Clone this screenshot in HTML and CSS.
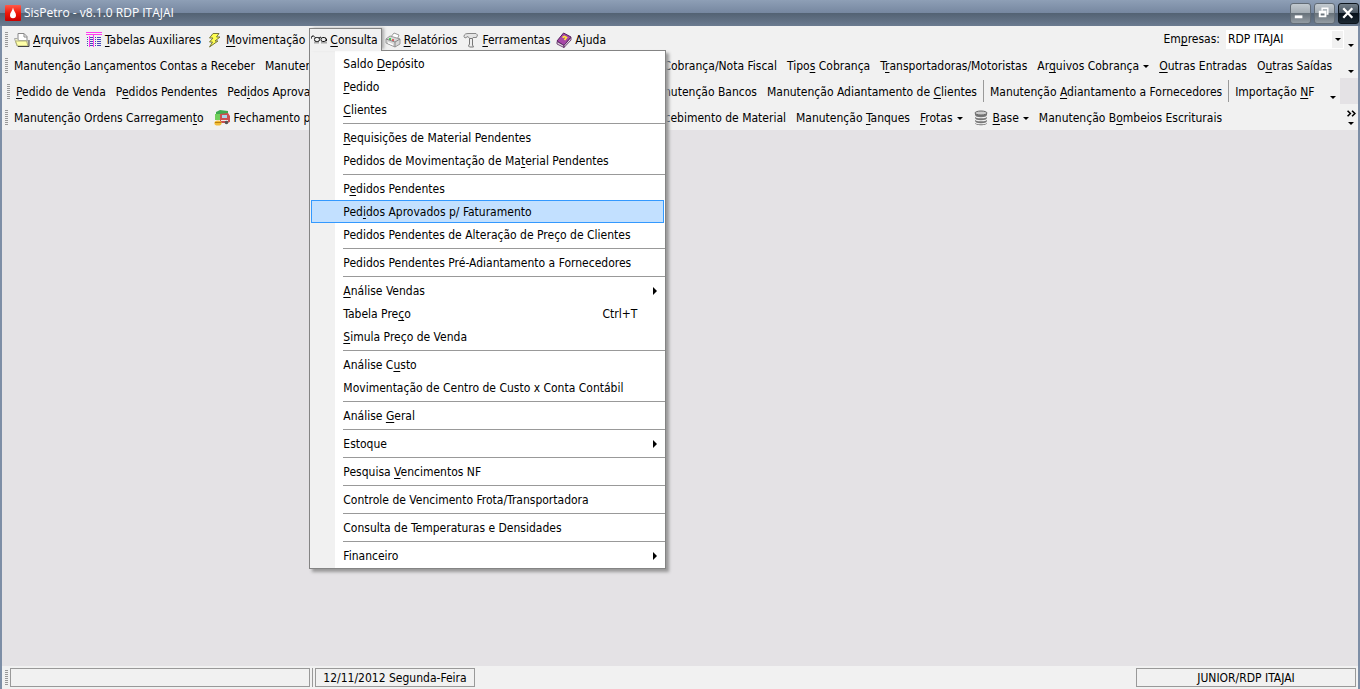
FILE: index.html
```
<!DOCTYPE html>
<html lang="pt-BR">
<head>
<meta charset="utf-8">
<title>SisPetro - v8.1.0 RDP ITAJAI</title>
<link rel="stylesheet" href="styles.css">
</head>
<body>
<div class="window">
  <header class="titlebar">
    <svg class="logo" viewBox="0 0 16 16"><defs><linearGradient id="red" x1="0" y1="0" x2="0" y2="1"><stop offset="0" stop-color="#ff5a4a"/><stop offset=".5" stop-color="#f01808"/><stop offset="1" stop-color="#c80000"/></linearGradient></defs><rect width="16" height="16" rx="1" fill="url(#red)"/><path d="M8 2.500C8.600 6 11 7.500 11 10.200a3 3 0 0 1-6 0C5 7.500 7.400 6 8 2.500z" fill="#fff"/></svg>
    <h1 class="title">SisPetro - v8.1.0 RDP ITAJAI</h1>
    <div class="controls">
      <button class="control" aria-label="Minimizar"><svg viewBox="0 0 20 20"><path d="M4 12h8v3H4z" fill="#fff"/></svg></button>
      <button class="control" aria-label="Restaurar"><svg viewBox="0 0 20 20"><path d="M7.500 7V4.500h6v6H12" fill="none" stroke="#fff" stroke-width="1.500"/><path d="M4 7h8v7H4z M6 10v2h4v-2z" fill="#fff" fill-rule="evenodd"/></svg></button>
      <button class="control close" aria-label="Fechar"><svg viewBox="0 0 20 20"><path d="M4.500 4.500l9.500 10M14 4.500l-9.500 10" stroke="#fff" stroke-width="2.400"/></svg></button>
    </div>
  </header>

  <div class="client">
    <div class="bar">
      <span class="grip"></span>
      <nav class="mainmenu">
        <button class="item"><svg class="icon" viewBox="0 0 16 16"><path d="M4 8V1.500h6l3 3V10" fill="#fff" stroke="#888"/><path d="M10 1.500V5h3" fill="none" stroke="#888"/><path d="M.5 6.500h3l1 2h9.500v5.500H3z" fill="#f4f4cc" stroke="#aaa"/><path d="M1.500 9l2 5h10.500l-1.500-5z" fill="#ffffa8" stroke="#b4b478"/><path d="M15 8v6.500H4" fill="none" stroke="#444"/></svg><span><u>A</u>rquivos</span></button>
        <button class="item"><svg class="icon" viewBox="0 0 16 16" shape-rendering="crispEdges"><path d="M0 0h16v1H0zM0 2h7v1H0zM8 2h8v1H8zM7 2h1v13H7zM3 4h1v11H3z" fill="#ff3cf0"/><path d="M4 5h3v1H4zM4 7h3v1H4zM4 9h3v1H4zM4 11h3v1H4zM4 13h3v1H4zM1 5h1v1H1zM1 7h1v1H1zM1 9h1v1H1zM1 11h1v1H1zM1 13h1v1H1zM9 5h1v1H9zM9 7h1v1H9zM9 9h1v1H9zM9 11h1v1H9zM9 13h1v1H9zM11 5h4v1h-4zM11 7h4v1h-4zM11 9h4v1h-4zM11 11h4v1h-4zM11 13h4v1h-4z" fill="#4848b8"/></svg><span><u>T</u>abelas Auxiliares</span></button>
        <button class="item"><svg class="icon" viewBox="0 0 16 16"><path d="M6 1.500h6L9.500 5H13L8 9h3L2.500 15l3-5H2.500L6 6H2.500z" fill="#ffff50" stroke="#77773a"/></svg><span><u>M</u>ovimentação</span></button>
        <div class="opened">
          <button class="item active" aria-expanded="true"><svg class="icon" viewBox="0 0 16 16"><path d="M3 10.500h5M10 10.500h6" stroke="#aaa" stroke-width="2"/><path d="M0 7V5h1l1-1.500 2 2M8 6l2-1M14 6l1.500 1v2" fill="none" stroke="#111"/><rect x="3.500" y="5.500" width="5" height="4" rx="1.800" fill="#eee" stroke="#111"/><rect x="10" y="5.500" width="5" height="4" rx="1.800" fill="#eee" stroke="#111"/></svg><span><u>C</u>onsulta</span></button>
          <ul class="dropdown">
            <li><button class="entry"><span>Saldo <u>D</u>epósito</span></button></li>
            <li><button class="entry"><span><u>P</u>edido</span></button></li>
            <li><button class="entry"><span><u>C</u>lientes</span></button></li>
            <li class="rule"></li>
            <li><button class="entry"><span><u>R</u>equisições de Material Pendentes</span></button></li>
            <li><button class="entry"><span>Pedidos de Movimentação de Ma<u>t</u>erial Pendentes</span></button></li>
            <li class="rule"></li>
            <li><button class="entry"><span>P<u>e</u>didos Pendentes</span></button></li>
            <li><button class="entry selected"><span>Ped<u>i</u>dos Aprovados p/ Faturamento</span></button></li>
            <li><button class="entry"><span>Pedidos Pendentes de Alteração de Preço de Clientes</span></button></li>
            <li class="rule"></li>
            <li><button class="entry"><span>Pedidos Pendentes Pré-Adiantamento a Fornecedores</span></button></li>
            <li class="rule"></li>
            <li><button class="entry"><span><u>A</u>nálise Vendas</span><i class="more"></i></button></li>
            <li><button class="entry"><span>Tabela Pre<u>ç</u>o</span><kbd>Ctrl+T</kbd></button></li>
            <li><button class="entry"><span><u>S</u>imula Preço de Venda</span></button></li>
            <li class="rule"></li>
            <li><button class="entry"><span>Análise C<u>u</u>sto</span></button></li>
            <li><button class="entry"><span>Movimentação de Centro de Custo x Conta Contábil</span></button></li>
            <li class="rule"></li>
            <li><button class="entry"><span>Análise <u>G</u>eral</span></button></li>
            <li class="rule"></li>
            <li><button class="entry"><span>Estoque</span><i class="more"></i></button></li>
            <li class="rule"></li>
            <li><button class="entry"><span>Pesquisa <u>V</u>encimentos NF</span></button></li>
            <li class="rule"></li>
            <li><button class="entry"><span>Controle de Vencimento Frota/Transportadora</span></button></li>
            <li class="rule"></li>
            <li><button class="entry"><span>Consulta de Temperaturas e Densidades</span></button></li>
            <li class="rule"></li>
            <li><button class="entry"><span>Financeiro</span><i class="more"></i></button></li>
          </ul>
        </div>
        <button class="item"><svg class="icon" viewBox="0 0 16 16"><path d="M5 6l4-5 5 2-2 5" fill="#fff" stroke="#999"/><path d="M1 7l4-3 10 3v5l-5 3-9-4z" fill="#d8d8d8" stroke="#999"/><path d="M1 7l9 3 5-3M10 10v5" fill="none" stroke="#888"/><path d="M3 10l5 2v1.500l-5-2z" fill="#fff"/><path d="M4 7h2" stroke="#1fc030" stroke-width="1.500"/><path d="M7 8h2" stroke="#e04040" stroke-width="1.500"/></svg><span><u>R</u>elatórios</span></button>
        <button class="item"><svg class="icon" viewBox="0 0 16 16"><path d="M1 4.500C1 2 3 1.500 6 1.500h7l1.500 1.500-1 2.500H10l-1 1H6.500L5 4.500 2 6z" fill="#e4e4e4" stroke="#888"/><path d="M6.500 6.500h3V13l1 2h-4l-1-1 1-2z" fill="#eee" stroke="#777"/></svg><span><u>F</u>erramentas</span></button>
        <button class="item"><svg class="icon" viewBox="0 0 16 16"><path d="M1 9L7.500 1l7.500 4-7 8.500z" fill="#a848a8" stroke="#54205c"/><path d="M1 9.500v2.500l7 3.500v-2zM8 13.500l7-8v2.500l-7 7.500z" fill="#e4dce4" stroke="#54205c" stroke-width=".8"/><path d="M6.500 5.500l2-1 2 1-2 2.500" fill="none" stroke="#ffe838" stroke-width="1.600"/></svg><span>Ajuda</span></button>
      </nav>
      <div class="company">
        <label for="company">Em<u>p</u>resas:</label>
        <span class="combo"><select id="company"><option>RDP ITAJAI</option></select><i class="caret"></i></span>
      </div>
      <span class="overflow"><i class="caret"></i></span>
    </div>

    <div class="bar">
      <span class="grip"></span>
      <div class="lead">
        <button class="item">Manutenção Lançamentos Contas a Receber</button>
        <button class="item">Manutenção</button>
        <button class="item last">Cobrança/Nota Fiscal</button>
      </div>
      <button class="item"><span>Tipo<u>s</u> Cobrança</span></button>
      <button class="item"><span>T<u>r</u>ansportadoras/Motoristas</span></button>
      <button class="item"><span>Ar<u>q</u>uivos Cobrança</span><i class="caret"></i></button>
      <button class="item"><span><u>O</u>utras Entradas</span></button>
      <button class="item"><span>O<u>u</u>tras Saídas</span></button>
      <span class="overflow"><i class="caret"></i></span>
    </div>

    <div class="bar short">
      <span class="grip"></span>
      <div class="lead narrow">
        <button class="item"><span><u>P</u>edido de Venda</span></button>
        <button class="item"><span>P<u>e</u>didos Pendentes</span></button>
        <button class="item"><span>Ped<u>i</u>dos Aprovados</span></button>
        <button class="item last">Manutenção Bancos</button>
      </div>
      <button class="item"><span>Manutenção Adiantamento de <u>C</u>lientes</span></button>
      <span class="divider"></span>
      <button class="item"><span>Manutenção <u>A</u>diantamento a Fornecedores</span></button>
      <span class="divider"></span>
      <button class="item"><span>Importação <u>N</u>F</span></button>
      <span class="overflow"><i class="caret"></i></span>
    </div>

    <div class="bar">
      <span class="grip"></span>
      <div class="lead wide">
        <button class="item"><span>Manutenção Ordens Carregamen<u>t</u>o</span></button>
        <button class="item"><svg class="icon" viewBox="0 0 16 16"><path d="M2 2l4-2 8 1v6H2z" fill="#3faa50"/><path d="M1 4h5v6H1z" fill="#72cf5c"/><path d="M6 4l8-1 2 3v6l-3 1H6z" fill="#cc4f52"/><path d="M8 5h5v3H8z" fill="#a8d4ee"/><path d="M7 10h7v1H7z" fill="#eee"/><circle cx="12.500" cy="12.500" r="1.800" fill="#555"/><ellipse cx="4" cy="13" rx="3.600" ry="2.600" fill="#f2bd38"/><path d="M1 12.500h6" stroke="#b98010"/></svg><span>Fechamento p</span></button>
        <button class="item last">Recebimento de Material</button>
      </div>
      <button class="item"><span>Manutenção <u>T</u>anques</span></button>
      <button class="item"><span><u>F</u>rotas</span><i class="caret"></i></button>
      <button class="item"><svg class="icon" viewBox="0 0 16 16"><path d="M2 3v10c0 3 12 3 12 0V3z" fill="#777"/><path d="M2 5.500c0 3 12 3 12 0M2 8.500c0 3 12 3 12 0M2 11.500c0 3 12 3 12 0" fill="none" stroke="#eee" stroke-width="1.200"/><ellipse cx="8" cy="3" rx="6" ry="2" fill="#ccc" stroke="#666"/></svg><span><u>B</u>ase</span><i class="caret"></i></button>
      <button class="item"><span>Manutenção B<u>o</u>mbeios Escriturais</span></button>
      <span class="overflow more-items"><svg class="chevrons" viewBox="0 0 8 6"><path d="M.5.500L3 3 .5 5.500M4.500.500L7 3 4.500 5.500" fill="none" stroke="#000" stroke-width="1.400"/></svg><i class="caret"></i></span>
    </div>

    <main class="workspace"></main>

    <footer class="statusbar">
      <span class="grip"></span>
      <div class="panel message"></div>
      <span class="split"></span>
      <div class="panel date">12/11/2012 Segunda-Feira</div>
      <div class="panel user">JUNIOR/RDP ITAJAI</div>
    </footer>
  </div>
</div>
</body>
</html>
```
FILE: styles.css
```
* { box-sizing: border-box; }

body {
  margin: 0;
  font: 12px/16px "DejaVu Sans Condensed", "Open Sans", sans-serif;
  color: #000;
}

button, select {
  margin: 0;
  padding: 0;
  border: 0;
  background: none;
  font: inherit;
  color: inherit;
}

u {
  text-underline-offset: 2px;
  text-decoration-thickness: 1px;
  text-decoration-skip-ink: none;
}

.window {
  display: flex;
  flex-direction: column;
  min-height: 100vh;
  background: #f1f1f1;
}

.titlebar {
  display: flex;
  align-items: center;
  height: 26px;
  padding: 0 1px 0 5px;
  gap: 3px;
  background: linear-gradient(#8e9fb6, #7687a0 50%, #536273 50%, #6b7b90);
  color: #fff;
}

.logo { width: 16px; height: 16px; }

.title {
  margin: 0;
  font: 12px/16px "Open Sans", sans-serif;
}

.controls {
  display: flex;
  gap: 3px;
  margin-left: auto;
}

.control {
  width: 21px;
  height: 21px;
  border: 1px solid #626c76;
  border-radius: 3px;
  background: linear-gradient(#c2cad0, #a2abb2 48%, #68727a 50%, #949da4);
}

.control svg { display: block; width: 100%; }

.close {
  border-color: #0c141c;
  background: linear-gradient(#74808a, #46525e 48%, #06101a 50%, #1c2832);
}

.client {
  flex: 1;
  display: flex;
  flex-direction: column;
  border: solid #7d8ea6;
  border-width: 0 2px;
}

.bar {
  display: flex;
  align-items: center;
  height: 26px;
  padding-left: 3px;
  background: #f1f1f1;
  white-space: nowrap;
}

.short {
  margin-right: 18px;
  padding-left: 5px;
  box-shadow: 18px 0 #e4e2e5;
}

.grip {
  flex: none;
  width: 3px;
  height: 15px;
  margin-right: 1px;
  background: repeating-linear-gradient(#999 0 1px, transparent 1px 2px);
}

.mainmenu {
  display: flex;
  align-items: center;
  margin-left: 2px;
}

.item {
  display: flex;
  align-items: center;
  gap: 4px;
  height: 24px;
  padding: 2px 5px 0;
}

.mainmenu .item { gap: 3px; padding: 2px 3px 0; }

.icon { flex: none; width: 16px; height: 16px; }

.lead {
  flex: none;
  display: flex;
  width: 773px;
}

.narrow { width: 751px; }

.wide { width: 782px; }

.last { margin-left: auto; }

.caret {
  flex: none;
  border: solid transparent;
  border-width: 3px 3px 0;
  border-top-color: #000;
}

.overflow {
  display: flex;
  flex-direction: column;
  align-items: center;
  justify-content: flex-end;
  gap: 5px;
  width: 14px;
  height: 16px;
  margin-left: auto;
}

.chevrons { width: 9px; height: 7px; }

.divider {
  width: 1px;
  height: 22px;
  margin: 0 1px;
  background: #999;
}

.company {
  display: flex;
  align-items: center;
  gap: 6px;
  margin-left: auto;
}

.company + .overflow { margin-left: 0; }

.combo {
  display: flex;
  align-items: center;
  width: 118px;
  height: 19px;
  padding-right: 3px;
  background: linear-gradient(#f1f1f1, #f1f1f1) 106px 1px / 11px 17px no-repeat #fff;
}

.combo select { flex: 1; padding-left: 2px; appearance: none; }

.opened {
  position: relative;
  height: 22px;
  margin-left: 1px;
}

.mainmenu .active {
  position: relative;
  z-index: 3;
  height: 23px;
  border: 1px solid #848484;
  border-bottom: 0;
  padding: 0 3px 0 1px;
  background: #f1f1f1;
  box-shadow: 3px -1px 3px -1px #aaa;
}

.dropdown {
  position: absolute;
  z-index: 2;
  top: 100%;
  left: 0;
  width: 357px;
  margin: 0;
  padding: 1px 0;
  border: 1px solid #848484;
  background: linear-gradient(90deg, #f1f1f1 25px, #fff 25px);
  box-shadow: 3px 3px 3px #999;
  list-style: none;
}

.entry {
  display: flex;
  align-items: center;
  width: calc(100% - 2px);
  height: 23px;
  margin: 0 1px;
  padding: 0 7px 0 32px;
}

.entry span { flex: 1; text-align: left; }

.entry kbd { margin-right: 20px; font: inherit; }

.selected {
  padding-left: 31px;
  border: 1px solid #3399ff;
  background: #c2e0ff;
}

.rule {
  height: 5px;
  margin-left: 33px;
  background: linear-gradient(#999, #999) 0 2px / 100% 1px no-repeat;
}

.more {
  border: solid transparent;
  border-width: 4px 0 4px 4px;
  border-left-color: #000;
}

.workspace { flex: 1; background: #e4e2e5; }

.statusbar {
  display: flex;
  align-items: center;
  height: 23px;
  padding: 0 2px 0 3px;
}

.panel {
  height: 19px;
  padding: 0 5px;
  border: 1px solid #999;
  line-height: 18px;
  text-align: center;
}

.message { width: 300px; margin-left: 1px; }

.date { min-width: 160px; }

.split {
  width: 1px;
  height: 19px;
  margin: 0 2px;
  background: #999;
}

.user { width: 220px; margin-left: auto; }
```
